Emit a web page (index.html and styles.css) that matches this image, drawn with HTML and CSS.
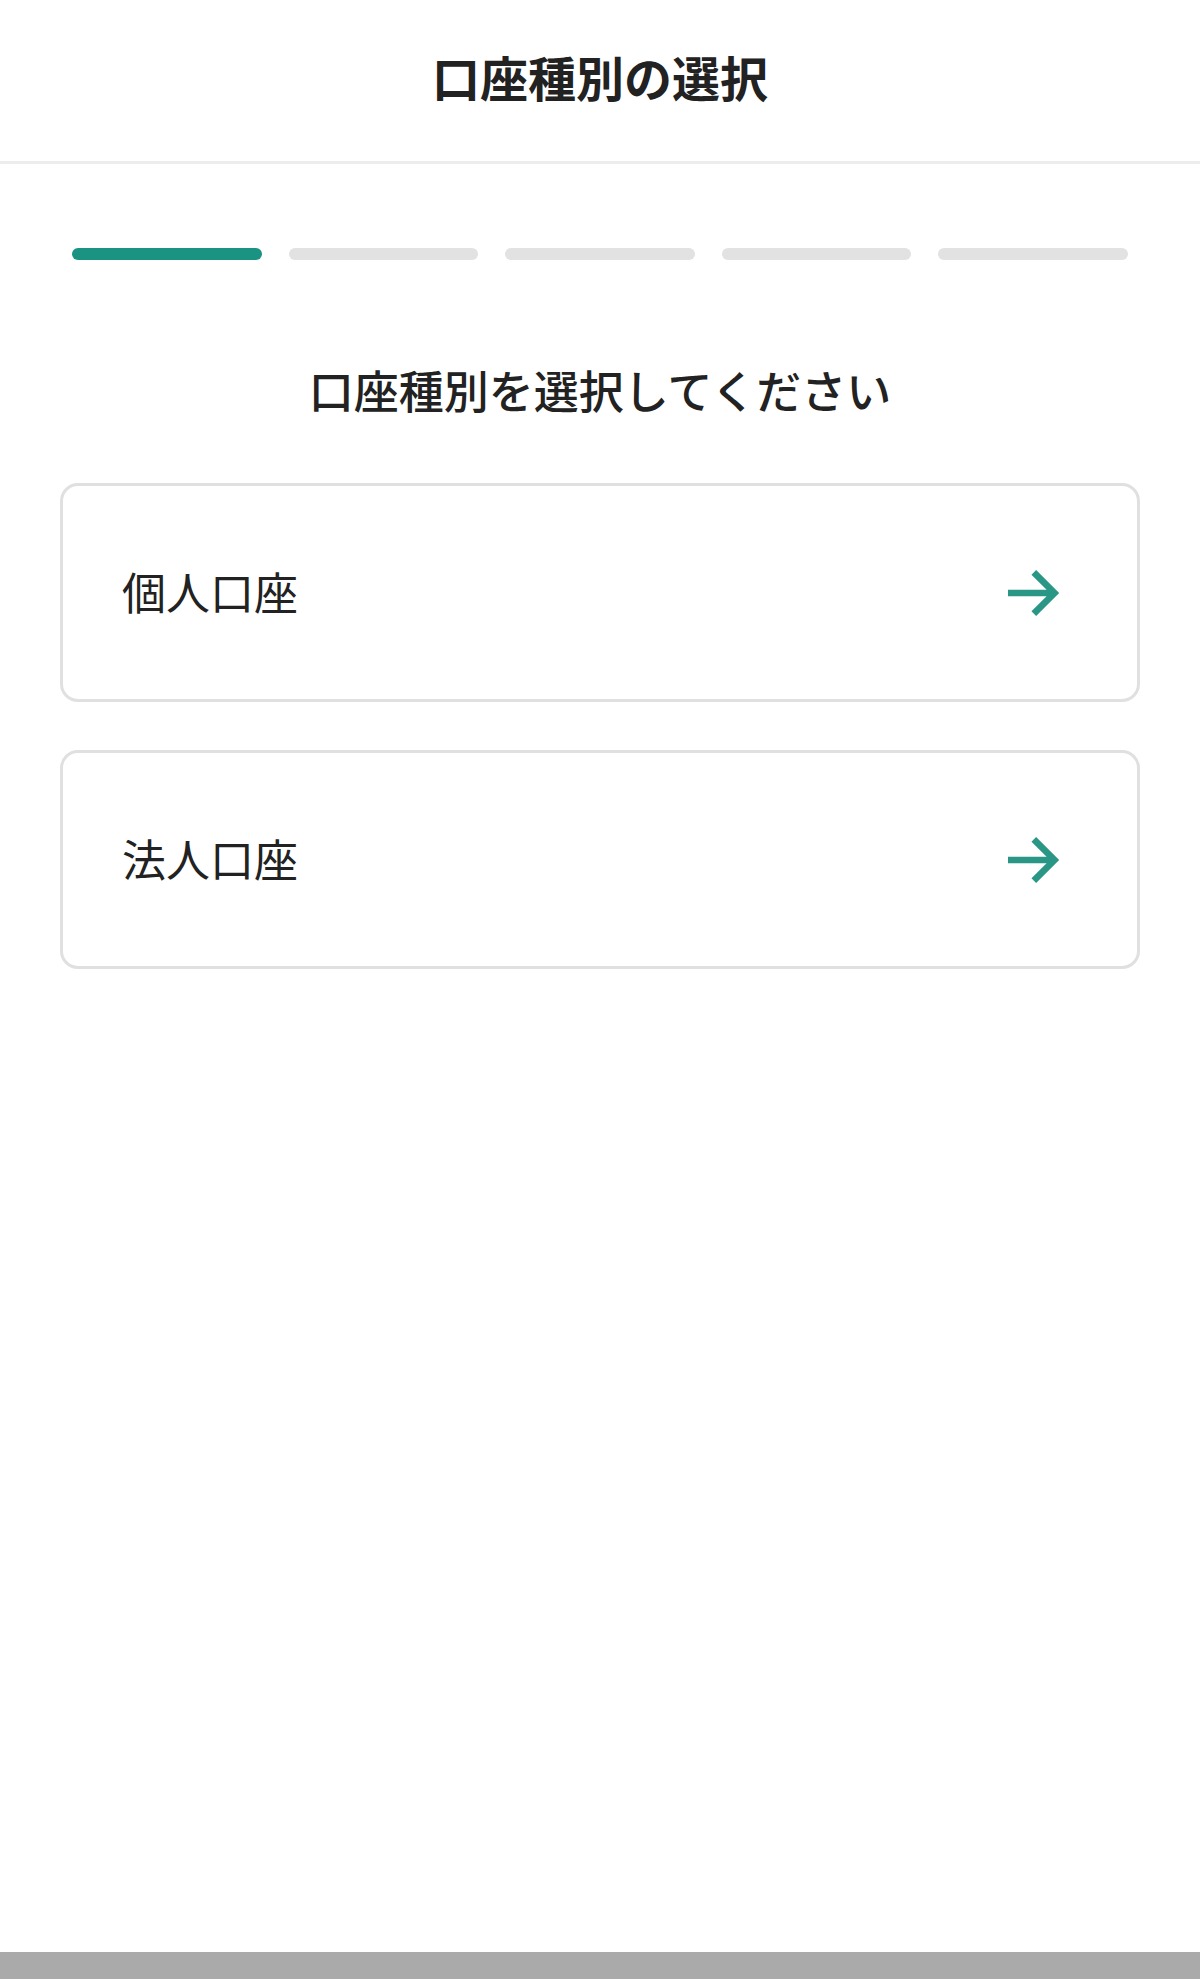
FILE: index.html
```html
<!DOCTYPE html>
<html lang="ja">
<head>
    <meta charset="UTF-8">
    <meta name="viewport" content="width=device-width, initial-scale=1.0">
    <title>口座種別の選択</title>
    <link rel="stylesheet" href="styles.css">
</head>
<body>
    <div class="page">
        <header class="header">
            <h1 class="header-title">口座種別の選択</h1>
        </header>

        <main class="content">
            <div class="steps">
                <span class="step active"></span>
                <span class="step"></span>
                <span class="step"></span>
                <span class="step"></span>
                <span class="step"></span>
            </div>

            <h2 class="lead">口座種別を選択してください</h2>

            <div class="options">
                <a class="option" href="#">
                    <span class="option-label">個人口座</span>
                    <svg class="option-arrow" viewBox="0 0 24 24">
                        <path d="M4 12H19.3M12.6 5.1L19.5 12L12.6 18.9" />
                    </svg>
                </a>
                <a class="option" href="#">
                    <span class="option-label">法人口座</span>
                    <svg class="option-arrow" viewBox="0 0 24 24">
                        <path d="M4 12H19.3M12.6 5.1L19.5 12L12.6 18.9" />
                    </svg>
                </a>
            </div>
        </main>

        <div class="bottom-bar"></div>
    </div>
</body>
</html>
```

FILE: styles.css
```css
body {
    margin: 0;
    font-family: "Noto Sans CJK JP", "Noto Sans", sans-serif;
    color: #222222;
    background-color: #ffffff;
}
.page {
    display: flex;
    flex-direction: column;
    min-height: 100vh;
}
.header {
    height: 164px;
    display: flex;
    align-items: center;
    justify-content: center;
    border-bottom: 3px solid #ececec;
    padding-bottom: 10px;
    box-sizing: border-box;
}
.header-title {
    margin: 0;
    font-size: 48px;
    font-weight: bold;
    line-height: 1;
}
.content {
    flex: 1;
    padding: 84px 60px 0;
}
.steps {
    display: flex;
    gap: 27px;
    padding: 0 12px;
}
.step {
    flex: 1;
    height: 12px;
    border-radius: 6px;
    background-color: #e2e2e2;
}
.step.active {
    background-color: #1b9383;
}
.lead {
    margin: 98px 0 61px;
    text-align: center;
    font-size: 45px;
    font-weight: 500;
    line-height: 64px;
}
.options {
    display: flex;
    flex-direction: column;
    gap: 48px;
}
.option {
    display: flex;
    align-items: center;
    justify-content: space-between;
    height: 219px;
    box-sizing: border-box;
    padding: 0 69px 0 59px;
    border: 3px solid #e0e0e0;
    border-radius: 18px;
    text-decoration: none;
    color: #222222;
}
.option-label {
    font-size: 44px;
    line-height: 1;
    margin-top: -4px;
}
.option-arrow {
    width: 72px;
    height: 72px;
    fill: none;
    stroke: #2a9686;
    stroke-width: 2.2;
}
.bottom-bar {
    height: 27px;
    background-color: #aaaaaa;
}
```
